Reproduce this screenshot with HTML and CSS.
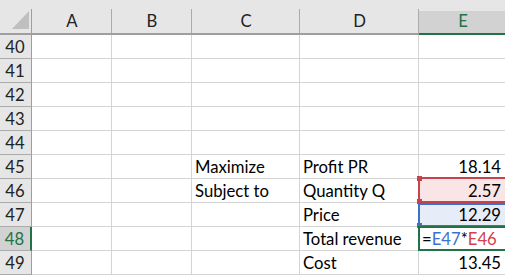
FILE: index.html
```html
<!DOCTYPE html>
<html>
<head>
<meta charset="utf-8">
<link rel="stylesheet" href="styles.css">
</head>
<body>
<div class="sheet">
  <div class="h corner"><svg class="tri" width="32" height="35" viewBox="0 0 32 35"><polygon points="29,13 29,31 12,31" fill="#bfbfbf"/></svg></div>
  <div class="h">A</div>
  <div class="h">B</div>
  <div class="h">C</div>
  <div class="h">D</div>
  <div class="h sel">E</div>

  <div class="r">40</div><div class="c"></div><div class="c"></div><div class="c"></div><div class="c"></div><div class="c"></div>
  <div class="r">41</div><div class="c"></div><div class="c"></div><div class="c"></div><div class="c"></div><div class="c"></div>
  <div class="r">42</div><div class="c"></div><div class="c"></div><div class="c"></div><div class="c"></div><div class="c"></div>
  <div class="r">43</div><div class="c"></div><div class="c"></div><div class="c"></div><div class="c"></div><div class="c"></div>
  <div class="r">44</div><div class="c"></div><div class="c"></div><div class="c"></div><div class="c"></div><div class="c"></div>

  <div class="r">45</div><div class="c"></div><div class="c"></div><div class="c">Maximize</div><div class="c">Profit PR</div><div class="c num">18.14</div>
  <div class="r">46</div><div class="c"></div><div class="c"></div><div class="c">Subject to</div><div class="c">Quantity Q</div>
  <div class="c num ref-red"><span class="box box-red"><i class="hd hd-tl"></i><i class="hd hd-bl"></i></span><span class="v">2.57</span></div>
  <div class="r">47</div><div class="c"></div><div class="c"></div><div class="c"></div><div class="c">Price</div>
  <div class="c num ref-blue"><span class="box box-blue"><i class="hd hd-bl"></i></span><span class="v">12.29</span></div>
  <div class="r rsel">48</div><div class="c"></div><div class="c"></div><div class="c"></div><div class="c">Total revenue</div>
  <div class="c active"><span class="box box-green"></span><span class="v">=<span class="fb">E47</span>*<span class="fr">E46</span></span></div>
  <div class="r">49</div><div class="c"></div><div class="c"></div><div class="c"></div><div class="c">Cost</div><div class="c num">13.45</div>
</div>
</body>
</html>
```

FILE: styles.css
```css
html, body {
  margin: 0;
  padding: 0;
  background: #ffffff;
  overflow: hidden;
}

.sheet {
  display: grid;
  grid-template-columns: 32px 80px 80px 108px 119px 88px;
  grid-template-rows: 35px;
  grid-auto-rows: 24px;
  font-family: "Lato", "Liberation Sans", sans-serif;
  font-size: 16.7px;
  color: #000;
}

.h {
  box-sizing: border-box;
  background: linear-gradient(#ababab, #ababab) right bottom / 1px 24px no-repeat, #e6e6e6;
  border-bottom: 2px solid #9e9e9e;
  display: flex;
  align-items: flex-end;
  justify-content: center;
  padding-bottom: 2px;
  color: #222;
}

.corner {
  position: relative;
  padding: 0;
  background: linear-gradient(#9e9e9e, #9e9e9e) right bottom / 1px 24px no-repeat, #e6e6e6;
}

.tri {
  display: block;
}

.h.sel {
  background: linear-gradient(#e6e6e6 11px, #d2d2d2 11px);
  border-bottom-color: #217346;
  color: #217346;
}

.r {
  box-sizing: border-box;
  background: #e6e6e6;
  border-right: 1px solid #9e9e9e;
  border-bottom: 1px solid #ababab;
  display: flex;
  align-items: flex-end;
  justify-content: center;
  padding-bottom: 1px;
  padding-right: 1px;
  color: #222;
}

.r.rsel {
  background: #d2d2d2;
  border-right: 2px solid #217346;
  color: #217346;
}

.c {
  box-sizing: border-box;
  border-right: 1px solid #d4d4d4;
  border-bottom: 1px solid #d4d4d4;
  display: flex;
  align-items: flex-end;
  padding: 0 3px 1px 3px;
  white-space: nowrap;
  position: relative;
}

.c.num {
  justify-content: flex-end;
  padding-right: 5px;
}

.ref-red {
  background: #f9e5e6;
}

.ref-blue {
  background: #e6edf8;
}

.v {
  position: relative;
  z-index: 3;
}

.box {
  position: absolute;
  left: -1px;
  right: -10px;
  box-sizing: border-box;
  border: 2px solid;
}

.box-red {
  top: -2px;
  bottom: -1px;
  border-color: #c4434d;
  z-index: 2;
}

.box-blue {
  top: 0;
  bottom: -1px;
  border-color: #3f6fc6;
  z-index: 1;
}

.box-green {
  top: -1px;
  bottom: -1px;
  border-color: #217346;
  z-index: 2;
}

.hd {
  position: absolute;
  width: 5px;
  height: 5px;
  left: -3px;
}

.box-red .hd { background: #c4434d; }
.box-blue .hd { background: #3f6fc6; }

.hd-tl { top: -3px; }
.hd-bl { bottom: -3px; }

.fb { color: #3f6fd0; }
.fr { color: #d2404c; }
```
